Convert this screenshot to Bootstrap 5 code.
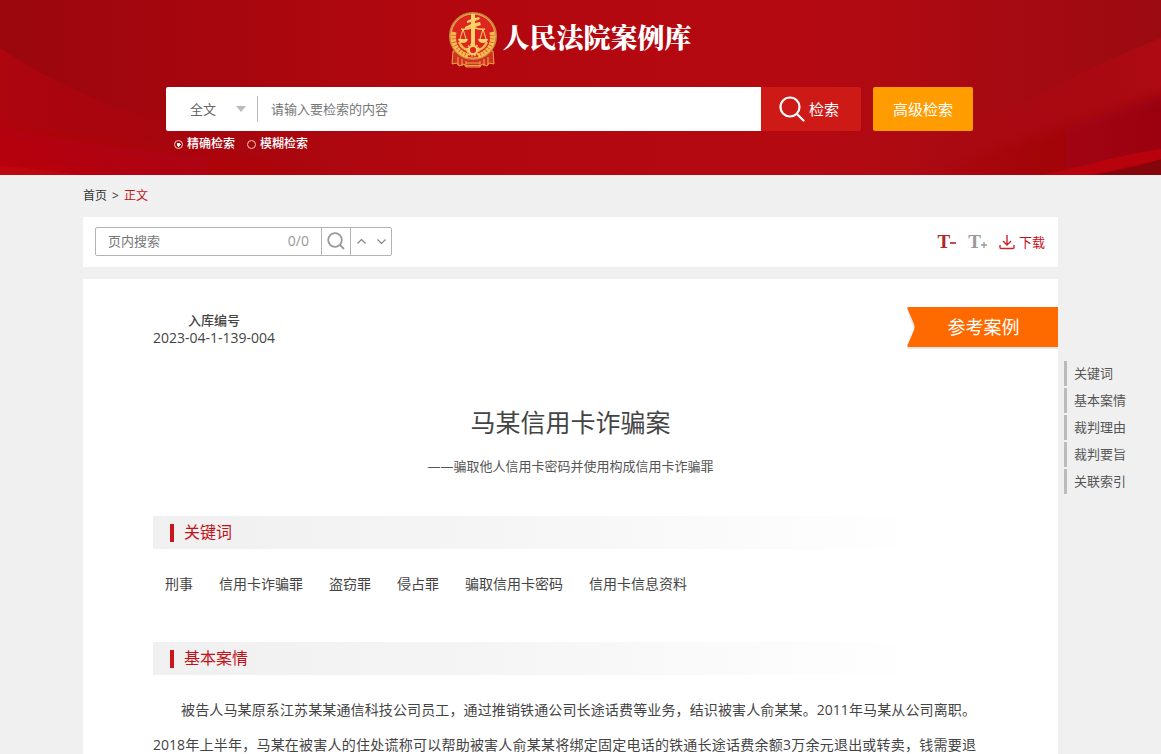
<!DOCTYPE html>
<html lang="zh-CN">
<head>
<meta charset="utf-8">
<meta name="viewport" content="width=device-width, initial-scale=1">
<title>人民法院案例库</title>
<link href="https://cdn.jsdelivr.net/npm/bootstrap@5.3.0/dist/css/bootstrap.min.css" rel="stylesheet">
<style>
  body { background: #f0f0f0; color: #444; font-family: "Open Sans", "Noto Sans CJK SC", sans-serif; font-size: 14px; line-height: 20px; }
  a { color: inherit; text-decoration: none; }
  .site-head { background: #b0060f; height: 175px; padding: 12px 22px 0 0; }
  .head-art { position: absolute; inset: 0; z-index: 0; }
  .head-inner { z-index: 1; max-width: 807px; margin: 0 auto; }
  .brand-row { height: 56px; gap: 5px; }
  .brand-name { color: #fff; font-family: "Noto Serif CJK SC", "Noto Sans CJK SC", serif; font-weight: 900; font-size: 27px; line-height: 40px; padding-bottom: 6px; }
  .search-row { margin-top: 19px; height: 44px; gap: 12px; }
  .search-box { background: #fff; border-radius: 2px 0 0 2px; padding: 0 12px 0 24px; }
  .scope-select { width: 56px; border: 0; background: transparent; color: #666; font-size: 13px; appearance: none; padding: 0; outline: 0; }
  .caret-down { width: 10px; height: 6px; margin-left: -10px; margin-right: 11px; pointer-events: none; }
  .search-box .rule { width: 1px; height: 26px; background: #bbb; }
  .search-input { border: 0; background: transparent; font-size: 13px; color: #666; padding: 0 0 0 13px; outline: 0; min-width: 0; }
  ::placeholder { color: #777; opacity: 1; }
  .btn-go, .btn-adv { width: 100px; height: 44px; border: 0; padding: 0; color: #fff; font-size: 15px; }
  .btn-go { background: #cd1a17; border-radius: 0 2px 2px 0; gap: 4px; padding-right: 4px; }
  .btn-adv { background: #ff9c00; border-radius: 2px; }
  .mode-row { font-size: 12px; line-height: 16px; color: #fff; font-weight: 500; padding: 5px 0 0 8px; gap: 12px; }
  .mode-row label { gap: 4px; }
  .mode-row input { appearance: none; width: 9px; height: 9px; margin: 0; border: 1px solid #ffc9b8; border-radius: 50%; }
  .mode-row input:checked { background: radial-gradient(circle, #fff 0 2px, transparent 2px); }
  .shell { padding-left: 83px; }
  .crumbs { height: 42px; font-size: 12px; color: #333; gap: 5px; }
  .red-text { color: #c1121a; }
  .tool-panel { background: #fff; height: 50px; padding: 0 13px 2px 12px; margin-bottom: 12px; }
  .find-box { border: 1px solid #b3b3b3; border-radius: 2px; height: 29px; width: 297px; }
  .find-box input { border: 0; outline: 0; font-size: 13px; padding: 0 0 0 12px; min-width: 0; background: transparent; }
  .find-box .hits { font-size: 14px; color: #999; padding-right: 12px; }
  .find-box button, .tool-btn { background: none; border: 0; padding: 0; }
  .find-box .find-go { width: 30px; border-left: 1px solid #b3b3b3; border-right: 1px solid #b3b3b3; }
  .find-box .step { width: 20px; }
  .tool-set { gap: 12px; padding-top: 2px; }
  .size-btn { font-family: "Liberation Serif", serif; font-weight: 700; font-size: 19px; line-height: 24px; }
  .size-down { color: #b0262a; }
  .size-up { color: #999; }
  .save-link { font-size: 13px; }
  .side-col { width: 103px; padding-left: 6px; padding-top: 186px; }
  .side-col .toc { gap: 2px; }
  .toc a { border-left: 3px solid #bbb; padding-left: 7px; font-size: 13px; line-height: 25px; color: #555; }
  .doc-panel { background: #fff; padding: 32px 70px 40px; }
  .doc-no { line-height: 17px; }
  .doc-no strong { font-size: 13px; font-weight: 500; }
  .ribbon { position: absolute; right: 0; top: 26px; width: 153px; height: 46px; }
  .ribbon span { position: absolute; inset: 2px 0 4px 4px; line-height: 40px; text-align: center; color: #fff; font-size: 18px; }
  .doc-title { font-size: 25px; line-height: 36px; font-weight: 400; margin: 56px 0 0; }
  .doc-sub { font-size: 13px; margin: 16px 0 0; color: #555; }
  .sec-head { font-size: 16px; font-weight: 400; height: 33px; padding-left: 17px; gap: 10px; margin: 0; background: linear-gradient(90deg, #f0f0f0, #f5f5f5 40%, #fff 92%); }
  .sec-head::before { content: ""; width: 4px; height: 18px; background: #c8161d; }
  .doc-sub + .sec-head { margin-top: 40px; }
  .tag-list { gap: 26px; padding: 25px 0 0 12px; margin: 0 0 48px; }
  .doc-text { line-height: 35px; text-indent: 2em; text-align: justify; text-align-last: justify; margin: 17px 12px 0 0; }
</style>
</head>
<body>
<header class="site-head position-relative">
  <svg class="head-art w-100 h-100" viewBox="0 0 1161 175" preserveAspectRatio="none" aria-hidden="true">
    <defs>
      <linearGradient id="base" x1="0" x2="1"><stop offset="0" stop-color="#9b060d"/><stop offset=".15" stop-color="#a5060e"/><stop offset=".4" stop-color="#b3070f"/><stop offset=".68" stop-color="#b50912"/><stop offset=".85" stop-color="#a80a12"/><stop offset="1" stop-color="#9c0a11"/></linearGradient>
      <linearGradient id="waveL" x1="0" x2="1"><stop offset="0" stop-color="#ae050f"/><stop offset="1" stop-color="#a8050e" stop-opacity="0"/></linearGradient>
      <linearGradient id="waveR" x1="0" x2="1"><stop offset="0" stop-color="#ad0610" stop-opacity="0"/><stop offset="1" stop-color="#ae0a13"/></linearGradient>
      <linearGradient id="glow" x1="0" x2="1"><stop offset="0" stop-color="#b6040e"/><stop offset="1" stop-color="#b4030d" stop-opacity="0"/></linearGradient>
      <linearGradient id="shade" x1="0" x2="1"><stop offset="0" stop-color="#a2020b" stop-opacity="0"/><stop offset="1" stop-color="#98040b"/></linearGradient>
      <filter id="soft"><feGaussianBlur stdDeviation="6"/></filter>
    </defs>
    <path fill="url(#base)" d="M0 0H1161V175H0z"/>
    <path fill="url(#waveL)" d="M0 48C60 88 130 118 260 150L330 175H0z"/>
    <path fill="url(#glow)" filter="url(#soft)" d="M-20 122C60 140 130 152 240 158L420 190H-20z"/>
    <path fill="#c3080f" opacity=".7" filter="url(#soft)" d="M-20 165Q50 167 130 185H-20z"/>
    <path fill="url(#waveR)" d="M960 130C1040 95 1100 62 1161 38V175H900z"/>
    <path fill="url(#shade)" filter="url(#soft)" d="M960 160C1050 130 1110 112 1180 88V190H900z"/>
    <path fill="#b8030d" d="M1040 175C1090 166 1120 154 1161 149V160Q1130 167 1090 175z"/>
    <path fill="#85060a" d="M1095 175Q1135 168 1161 159V175z"/>
  </svg>
  <div class="head-inner position-relative">
    <div class="brand-row d-flex justify-content-center align-items-center">
      <svg width="50" height="56" viewBox="0 0 50 56" aria-hidden="true">
        <path d="M5 39l-1 13 5-1 2 3 5-2 2 3h14l2-3 5 2 2-3 5 1-1-13z" fill="#d3301f" stroke="#e8a548" stroke-width="1"/>
        <path d="M10 45v8M14 47v7M18 49v6M32 49v6M36 47v7M40 45v8M18 51h14M18 53.500h14" fill="none" stroke="#efa84a" stroke-width="1"/>
        <circle cx="25" cy="24" r="23" fill="#df261e" stroke="#c98a3c" stroke-width="2"/>
        <circle cx="25" cy="24" r="22" fill="none" stroke="#f6bd5c" stroke-width=".8"/>
        <path d="M6 20Q3 38 20 44M44 20Q47 38 30 44" fill="none" stroke="#f3bb50" stroke-width="5" stroke-dasharray="3 .5"/>
        <path d="M11 30Q14 37 20 38M39 30Q36 37 30 38" fill="none" stroke="#f3bb50" stroke-width="2.500"/>
        <path d="M23 2h4v4l4-1 1 2-5 2v2l5-1 1 3-6 2v19h-4V15l-6 2v-2l6-3v-2l-4 1v-2l4-2z" fill="#fbd26a"/>
        <path d="M13 17q6 1 12-2 6 3 12 2" fill="none" stroke="#fbd26a" stroke-width="1.600"/>
        <path d="M15 17l-3 10M15 17l3 10M35 17l-3 10M35 17l3 10" stroke="#fbd26a" stroke-width="1" fill="none"/>
        <path d="M10 27h10q-1 4-5 4t-5-4zM30 27h10q-1 4-5 4t-5-4z" fill="#fbd26a"/>
        <circle cx="25" cy="38" r="4.200" fill="#df261e" stroke="#fbd26a" stroke-width="2.200"/>
        <circle cx="25" cy="38" r="6" fill="none" stroke="#fbd26a" stroke-width="1.200" stroke-dasharray="1.800 1.300"/>
      </svg>
      <div class="brand-name">人民法院案例库</div>
    </div>
    <form class="m-0">
      <div class="search-row d-flex">
        <div class="d-flex flex-grow-1">
          <div class="search-box d-flex align-items-center flex-grow-1">
            <select class="scope-select" aria-label="检索范围"><option>全文</option></select>
            <svg class="caret-down" viewBox="0 0 10 6" aria-hidden="true"><path d="M0 0h10L5 6z" fill="#bbb"/></svg>
            <span class="rule"></span>
            <input class="search-input flex-grow-1" type="text" placeholder="请输入要检索的内容" aria-label="检索内容">
          </div>
          <button type="button" class="btn-go d-flex align-items-center justify-content-center">
            <svg width="26" height="26" viewBox="0 0 26 26" fill="none" stroke="#fff" stroke-width="2.200" stroke-linecap="round" aria-hidden="true"><circle cx="11" cy="11" r="9.500"/><path d="M18 18l6.500 6.500"/></svg>
            <span>检索</span>
          </button>
        </div>
        <button type="button" class="btn-adv">高级检索</button>
      </div>
      <div class="mode-row d-flex">
        <label class="d-flex align-items-center"><input type="radio" name="mode" checked>精确检索</label>
        <label class="d-flex align-items-center"><input type="radio" name="mode">模糊检索</label>
      </div>
    </form>
  </div>
</header>

<div class="shell d-flex">
  <main class="flex-grow-1">
    <nav class="crumbs d-flex align-items-center" aria-label="breadcrumb"><a href="#">首页</a><span>&gt;</span><a href="#" class="red-text">正文</a></nav>
    <div class="tool-panel d-flex align-items-center justify-content-between">
      <div class="find-box d-flex align-items-stretch">
        <input class="flex-grow-1" type="text" placeholder="页内搜索" aria-label="页内搜索">
        <span class="hits align-self-center">0/0</span>
        <button type="button" class="find-go d-flex align-items-center justify-content-center" aria-label="搜索">
          <svg width="18" height="18" viewBox="0 0 18 18" fill="none" stroke="#999" stroke-width="1.800"><circle cx="8" cy="8" r="6.800"/><path d="M13 13l4 4"/></svg>
        </button>
        <button type="button" class="step d-flex align-items-center justify-content-center" aria-label="上一个"><svg width="9" height="5" viewBox="0 0 9 5" fill="none" stroke="#888" stroke-width="1.200"><path d="M.5 4.500l4-4 4 4"/></svg></button>
        <button type="button" class="step d-flex align-items-center justify-content-center" aria-label="下一个"><svg width="9" height="5" viewBox="0 0 9 5" fill="none" stroke="#888" stroke-width="1.200"><path d="M.5.5l4 4 4-4"/></svg></button>
      </div>
      <div class="tool-set d-flex align-items-center">
        <button type="button" class="tool-btn size-btn size-down d-flex align-items-center" aria-label="缩小字号">T<svg width="6" height="8" viewBox="0 0 6 8" aria-hidden="true"><path d="M0 5h6" stroke="currentColor" stroke-width="1.600"/></svg></button>
        <button type="button" class="tool-btn size-btn size-up d-flex align-items-center" aria-label="放大字号">T<svg width="6" height="12" viewBox="0 0 6 12" aria-hidden="true"><path d="M0 9h6M3 6v6" stroke="currentColor" stroke-width="1.300"/></svg></button>
        <a href="#" class="save-link red-text d-flex align-items-center gap-1">
          <svg width="16" height="16" viewBox="0 0 16 16" fill="none" stroke="#c9252d" stroke-width="1.400" aria-hidden="true"><path d="M8 1v10M4 7l4 4 4-4M1 11v2.500q0 1 1 1h12q1 0 1-1V11"/></svg>下载</a>
      </div>
    </div>
    <article class="doc-panel position-relative">
      <div class="doc-no d-inline-block text-center"><strong>入库编号</strong><br>2023-04-1-139-004</div>
      <div class="ribbon">
        <svg width="153" height="46" viewBox="0 0 153 46" aria-hidden="true">
          <path d="M3 5H153V44H4Q1 44 3 40L9 24 3 8z" fill="#ddd" opacity=".7"/>
          <path d="M4 2H153V42H4Q1 42 3 39L9 25Q10 22 9 19L3 5Q1 2 4 2z" fill="#ff6a00"/>
        </svg>
        <span>参考案例</span>
      </div>
      <h1 class="doc-title text-center">马某信用卡诈骗案</h1>
      <p class="doc-sub text-center">——骗取他人信用卡密码并使用构成信用卡诈骗罪</p>
      <h2 class="sec-head red-text d-flex align-items-center" id="keywords">关键词</h2>
      <ul class="tag-list list-unstyled d-flex flex-wrap">
        <li>刑事</li><li>信用卡诈骗罪</li><li>盗窃罪</li><li>侵占罪</li><li>骗取信用卡密码</li><li>信用卡信息资料</li>
      </ul>
      <h2 class="sec-head red-text d-flex align-items-center" id="facts">基本案情</h2>
      <p class="doc-text">被告人马某原系江苏某某通信科技公司员工，通过推销铁通公司长途话费等业务，结识被害人俞某某。2011年马某从公司离职。2018年上半年，马某在被害人的住处谎称可以帮助被害人俞某某将绑定固定电话的铁通长途话费余额3万余元退出或转卖，钱需要退</p>
    </article>
  </main>
  <aside class="side-col flex-shrink-0">
    <nav class="toc d-flex flex-column" aria-label="目录">
      <a href="#keywords">关键词</a><a href="#facts">基本案情</a><a href="#">裁判理由</a><a href="#">裁判要旨</a><a href="#">关联索引</a>
    </nav>
  </aside>
</div>
<script src="https://cdn.jsdelivr.net/npm/bootstrap@5.3.0/dist/js/bootstrap.bundle.min.js"></script>
</body>
</html>
